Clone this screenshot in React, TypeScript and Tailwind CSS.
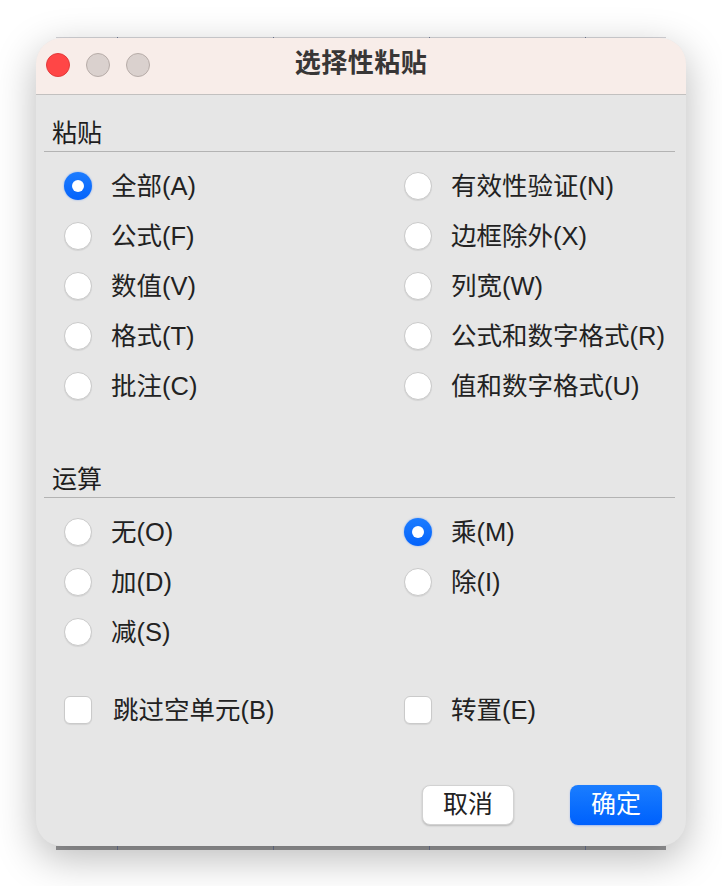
import React from "react";

const pasteLeft = ["全部(A)", "公式(F)", "数值(V)", "格式(T)", "批注(C)"];
const pasteRight = ["有效性验证(N)", "边框除外(X)", "列宽(W)", "公式和数字格式(R)", "值和数字格式(U)"];

// Radio circle, filled blue with a white dot when checked
function Radio({ checked }: { checked?: boolean }) {
  if (checked) {
    return (
      <span className="w-[28px] h-[28px] rounded-full bg-gradient-to-b from-[#1c7cff] to-[#0563fb] shadow-[0_0_2px_rgba(10,100,255,0.5)] flex items-center justify-center shrink-0">
        <span className="w-[12px] h-[12px] rounded-full bg-white" />
      </span>
    );
  }
  return (
    <span className="w-[28px] h-[28px] rounded-full bg-white border border-[#cacaca] shadow-[0_1px_1px_rgba(0,0,0,0.08)] shrink-0" />
  );
}

function Option({ label, checked }: { label: string; checked?: boolean }) {
  return (
    <div className="h-[50px] flex items-center gap-[19px]">
      <Radio checked={checked} />
      <span className="text-[25.5px] leading-[32px] text-[#222]">{label}</span>
    </div>
  );
}

function SectionHeader({ title }: { title: string }) {
  return (
    <div className="ml-[8px] mr-[11px] h-[57px] flex items-end pb-[2px] border-b border-[#b3b3b3]">
      <span className="pl-[8px] text-[25px] leading-[32px] text-[#1e1e1e]">{title}</span>
    </div>
  );
}

// edge of the spreadsheet that shows behind the dialog
function Ticks({ className }: { className: string }) {
  return (
    <div className={`mx-[20px] flex ${className}`}>
      <div className="w-[61px] shrink-0" />
      <div className="w-[156px] shrink-0 border-l border-[#6f7894]" />
      <div className="w-[156px] shrink-0 border-l border-[#6f7894]" />
      <div className="w-[156px] shrink-0 border-l border-[#6f7894]" />
      <div className="flex-1 border-l border-[#6f7894]" />
    </div>
  );
}

export default function App() {
  return (
    <div
      className="w-[722px] h-[886px] bg-white pt-[37px] pl-[36px]"
      style={{ fontFamily: '"Liberation Sans", "Noto Sans CJK SC", sans-serif' }}
    >
      <div className="w-[650px]">
        <Ticks className="h-px bg-[#d4d4d8]" />

        <div className="relative rounded-[26px] overflow-hidden bg-[#e6e6e6] shadow-[0_12px_40px_rgba(0,0,0,0.28)]">
          {/* Title bar */}
          <div className="relative h-[57px] bg-[#f8ede9] border-b border-[#c2c0bf] flex items-center">
            <div className="flex items-center gap-[16px] pl-[10px] pb-[2px]">
              <span className="w-[24px] h-[24px] rounded-full bg-[#ff4646] border border-[#e23a3a]" />
              <span className="w-[24px] h-[24px] rounded-full bg-[#dad1ce] border border-[#b7aca8]" />
              <span className="w-[24px] h-[24px] rounded-full bg-[#dad1ce] border border-[#b7aca8]" />
            </div>
            <div className="absolute inset-0 flex items-center justify-center pb-[5px]">
              <span className="text-[26px] font-bold text-[#383636] tracking-[0.5px]">选择性粘贴</span>
            </div>
          </div>

          {/* Paste */}
          <SectionHeader title="粘贴" />
          <div className="mt-[9px] pl-[28px] grid grid-cols-[340px_1fr]">
            <div>
              {pasteLeft.map((l, i) => (
                <Option key={l} label={l} checked={i === 0} />
              ))}
            </div>
            <div>
              {pasteRight.map((l) => (
                <Option key={l} label={l} />
              ))}
            </div>
          </div>

          {/* Operation */}
          <div className="mt-[30px]">
            <SectionHeader title="运算" />
          </div>
          <div className="mt-[9px] pl-[28px] grid grid-cols-[340px_1fr]">
            <div>
              <Option label="无(O)" />
              <Option label="加(D)" />
              <Option label="减(S)" />
            </div>
            <div>
              <Option label="乘(M)" checked />
              <Option label="除(I)" />
            </div>
          </div>

          {/* Checkboxes */}
          <div className="mt-[28px] pl-[28px] grid grid-cols-[340px_1fr]">
            <div className="h-[50px] flex items-center gap-[21px]">
              <span className="w-[28px] h-[28px] rounded-[6px] bg-white border border-[#cacaca] shadow-[0_1px_1px_rgba(0,0,0,0.08)]" />
              <span className="text-[25.5px] leading-[32px] text-[#222]">跳过空单元(B)</span>
            </div>
            <div className="h-[50px] flex items-center gap-[19px]">
              <span className="w-[28px] h-[28px] rounded-[6px] bg-white border border-[#cacaca] shadow-[0_1px_1px_rgba(0,0,0,0.08)]" />
              <span className="text-[25.5px] leading-[32px] text-[#222]">转置(E)</span>
            </div>
          </div>

          {/* Buttons */}
          <div className="mt-[50px] pb-[21px] pr-[24px] flex justify-end gap-[56px]">
            <button className="w-[92px] h-[40px] rounded-[8px] bg-white border border-[#d2d2d2] shadow-[0_1px_2px_rgba(0,0,0,0.2)] text-[25px] leading-none text-[#222] pb-[2px]">
              取消
            </button>
            <button className="w-[92px] h-[40px] rounded-[8px] bg-gradient-to-b from-[#1a7dff] to-[#0060fd] shadow-[0_1px_2px_rgba(0,80,255,0.3)] text-[25px] leading-none text-white pb-[2px]">
              确定
            </button>
          </div>
        </div>

        <Ticks className="h-[4px] bg-[#9c9c9e]" />
      </div>
    </div>
  );
}
